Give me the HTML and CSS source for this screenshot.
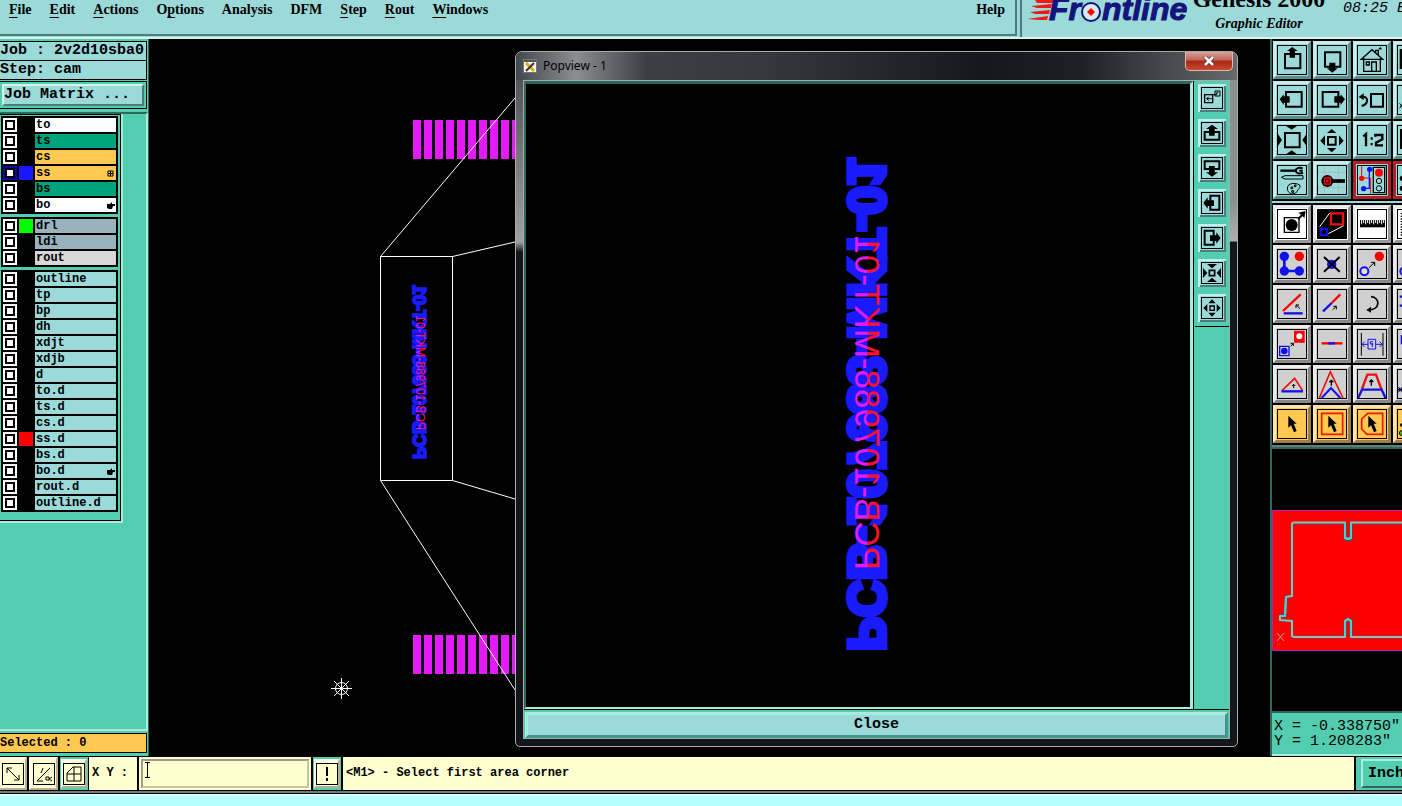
FILE: index.html
```html
<!DOCTYPE html>
<html lang="en">
<head>
<meta charset="utf-8">
<title>Genesis 2000 - Graphic Editor</title>
<link rel="stylesheet" href="styles.css">
</head>
<body>
<header class="top">
  <nav class="menu">
    <button class="menu-item"><u>F</u>ile</button>
    <button class="menu-item"><u>E</u>dit</button>
    <button class="menu-item"><u>A</u>ctions</button>
    <button class="menu-item">O<u>p</u>tions</button>
    <button class="menu-item">Analysis</button>
    <button class="menu-item">DFM</button>
    <button class="menu-item"><u>S</u>tep</button>
    <button class="menu-item"><u>R</u>out</button>
    <button class="menu-item"><u>W</u>indows</button>
    <button class="menu-item help">Help</button>
  </nav>
  <div class="brand">
    <svg class="logo" width="162" height="36" viewBox="0 0 162 36" role="img" aria-label="Frontline">
      <path fill="#f01818" d="M8 0H27L26 3H10zM4 6L25 4L24 8H10zM3 12L23 10L22 14H8zM0 19L21 16L20 20H12z"/>
      <text class="logo-text" x="22" y="20">Fr</text>
      <circle cx="64" cy="12" r="9" fill="#d4ecf0" stroke="#14147c" stroke-width="2"/>
      <path d="M64 8L68 12L64 16L60 12z" fill="#f00"/>
      <text class="logo-text" x="75" y="20">ntline</text>
    </svg>
    <div class="product"><span class="product-name">Genesis 2000</span><span class="product-sub">Graphic Editor</span></div>
    <span class="clock">08:25 E</span>
  </div>
</header>

<main class="work">
  <aside class="left">
    <div class="job-line">Job : 2v2d10sba0</div>
    <div class="job-line">Step: cam</div>
    <div class="matrix-frame"><button class="matrix">Job Matrix ...</button></div>
    <div class="layer-zone">
      <div class="layers">
        <div class="group">
          <label class="row"><input type="checkbox"><i class="chip"></i><span class="name white">to</span></label>
          <label class="row"><input type="checkbox"><i class="chip"></i><span class="name green">ts</span></label>
          <label class="row"><input type="checkbox"><i class="chip"></i><span class="name amber">cs</span></label>
          <label class="row current"><input type="checkbox"><i class="chip blue"></i><span class="name amber">ss<svg class="mark" width="9" height="9" viewBox="0 0 9 9"><path d="M2 2H7V7H2zM4.500 2V7M2 4.500H7" fill="none" stroke="#000"/></svg></span></label>
          <label class="row"><input type="checkbox"><i class="chip"></i><span class="name green">bs</span></label>
          <label class="row"><input type="checkbox"><i class="chip"></i><span class="name white">bo<svg class="mark" width="9" height="9" viewBox="0 0 9 9"><path d="M1 3L4 3L6 1V3H9V5H7L6 8H3L1 7z"/></svg></span></label>
        </div>
        <div class="group">
          <label class="row"><input type="checkbox"><i class="chip lime"></i><span class="name slate">drl</span></label>
          <label class="row"><input type="checkbox"><i class="chip"></i><span class="name slate">ldi</span></label>
          <label class="row"><input type="checkbox"><i class="chip"></i><span class="name grey">rout</span></label>
        </div>
        <div class="group">
          <label class="row"><input type="checkbox"><i class="chip"></i><span class="name">outline</span></label>
          <label class="row"><input type="checkbox"><i class="chip"></i><span class="name">tp</span></label>
          <label class="row"><input type="checkbox"><i class="chip"></i><span class="name">bp</span></label>
          <label class="row"><input type="checkbox"><i class="chip"></i><span class="name">dh</span></label>
          <label class="row"><input type="checkbox"><i class="chip"></i><span class="name">xdjt</span></label>
          <label class="row"><input type="checkbox"><i class="chip"></i><span class="name">xdjb</span></label>
          <label class="row"><input type="checkbox"><i class="chip"></i><span class="name">d</span></label>
          <label class="row"><input type="checkbox"><i class="chip"></i><span class="name">to.d</span></label>
          <label class="row"><input type="checkbox"><i class="chip"></i><span class="name">ts.d</span></label>
          <label class="row"><input type="checkbox"><i class="chip"></i><span class="name">cs.d</span></label>
          <label class="row"><input type="checkbox"><i class="chip red"></i><span class="name">ss.d</span></label>
          <label class="row"><input type="checkbox"><i class="chip"></i><span class="name">bs.d</span></label>
          <label class="row"><input type="checkbox"><i class="chip"></i><span class="name">bo.d<svg class="mark" width="9" height="9" viewBox="0 0 9 9"><path d="M1 3L4 3L6 1V3H9V5H7L6 8H3L1 7z"/></svg></span></label>
          <label class="row"><input type="checkbox"><i class="chip"></i><span class="name">rout.d</span></label>
          <label class="row"><input type="checkbox"><i class="chip"></i><span class="name">outline.d</span></label>
        </div>
      </div>
    </div>
    <div class="selected">Selected : 0</div>
  </aside>

  <section class="canvas">
    <svg class="board" width="1121" height="718" viewBox="149 39 1121 718">
      <defs>
        <pattern id="pads" x="413" y="120" width="11" height="515" patternUnits="userSpaceOnUse"><rect width="8" height="39" fill="#e41af8"/></pattern>
        <linearGradient id="mix" x1="0" y1="0" x2="0" y2="1"><stop offset=".48" stop-color="#ff1030"/><stop offset=".52" stop-color="#e41af8"/></linearGradient>
      </defs>
      <g fill="url(#pads)"><rect x="413" y="120" width="110" height="39"/><rect x="413" y="635" width="110" height="39"/></g>
      <path d="M380.500 256.500H452.500V480.500H380.500zM380.500 256.500L515 98M452.500 256.500L515 242M452.500 480.500L515 499M380.500 480.500L515 690" fill="none" stroke="#fff"/>
      <path d="M331 688.500H352M341.500 678V699M334 681L349 696M349 681L334 696" stroke="#fff" fill="none"/>
      <circle cx="341.500" cy="688.500" r="6" stroke="#fff" fill="none"/>
      <g transform="matrix(0 -1 1 0 413 459)"><text class="legend-blue small" transform="scale(1 -1)">PCB-107988-MKT-01</text></g>
      <g transform="matrix(0 -1 1 0 416 430)"><text class="legend-red small" transform="scale(1 -1)" fill="url(#mix)">PCB-107988-MKT-01</text></g>
    </svg>

    <div class="popup" role="dialog" aria-label="Popview - 1">
      <div class="titlebar">
        <svg width="14" height="14" viewBox="0 0 14 14"><path d="M.5 .5H13.500V13.500H.5z" fill="#f4f4f0" stroke="#777"/><path d="M1 2H13" stroke="#555" stroke-width="2"/><path d="M3 4L11 12" stroke="#d8b400" stroke-width="3"/><path d="M11 4L3 12" stroke="#333" stroke-width="2"/></svg>
        <span class="title">Popview - 1</span>
        <button class="win-close" aria-label="Close window"><svg width="12" height="10" viewBox="0 0 12 10"><path d="M2 1L10 9M10 1L2 9" stroke="#5b2a28" stroke-width="4"/><path d="M2 1L10 9M10 1L2 9" stroke="#fff" stroke-width="2.500"/></svg></button>
      </div>
      <div class="pop-body">
        <div class="pop-main">
          <div class="pop-canvas">
            <svg class="board" width="666" height="625" viewBox="526 83 666 625">
              <g transform="matrix(0 -1 1 0 849 650)"><text class="legend-blue big" transform="scale(1 -1)">PCB-107988-MKT-01</text></g>
              <g transform="matrix(0 -1 1 0 855 569)"><text class="legend-red big" transform="scale(1 -1)" fill="url(#mix)">PCB-107988-MKT-01</text></g>
            </svg>
          </div>
          <div class="pop-tools">
            <button class="pt" aria-label="Move popup"><svg viewBox="0 0 60 60"><path d="M8 20H32V44H8z" fill="none" stroke="#000" stroke-width="4"/><path d="M39 9H54V24H39zM14 32H29M20 26L14 32L20 38M32 20H44V14H49" fill="none" stroke="#000" stroke-width="3"/></svg></button>
            <button class="pt" aria-label="Pan up"><svg viewBox="0 0 60 60"><path d="M8 27H52V50H8z" fill="none" stroke="#000" stroke-width="6"/><path d="M30 5L48 18H38V38H21V18H12z"/></svg></button>
            <button class="pt" aria-label="Pan down"><svg viewBox="0 0 60 60"><path d="M8 10H52V33H8z" fill="none" stroke="#000" stroke-width="6"/><path d="M30 56L48 43H38V24H21V43H12z"/></svg></button>
            <button class="pt" aria-label="Pan left"><svg viewBox="0 0 60 60"><path d="M25 8H52V50H25z" fill="none" stroke="#000" stroke-width="6"/><path d="M4 30L17 13V22H36V39H17V47z"/></svg></button>
            <button class="pt" aria-label="Pan right"><svg viewBox="0 0 60 60"><path d="M8 8H35V50H8z" fill="none" stroke="#000" stroke-width="6"/><path d="M56 30L43 13V22H24V39H43V47z"/></svg></button>
            <button class="pt" aria-label="Zoom in"><svg viewBox="0 0 60 60"><path d="M22 22H38V38H22z" fill="none" stroke="#000" stroke-width="5"/><path d="M15 3H45L30 16zM15 57H45L30 44zM3 15V45L16 30zM57 15V45L44 30z"/></svg></button>
            <button class="pt" aria-label="Zoom out"><svg viewBox="0 0 60 60"><path d="M24 24H37V37H24z" fill="none" stroke="#000" stroke-width="4"/><path d="M30 4L41 16H19zM30 56L41 44H19zM4 30L16 18V42zM56 30L44 18V42z"/></svg></button>
          </div>
        </div>
        <div class="close-frame"><button class="close">Close</button></div>
      </div>
    </div>
  </section>

  <aside class="right">
    <div class="tools view">
      <button class="tb" aria-label="Pan up"><svg viewBox="0 0 90 90"><path d="M24 27H70V70H24z" fill="none" stroke="#000" stroke-width="6"/><path d="M46 6L62 18H54V38H38V18H30z"/></svg></button>
      <button class="tb" aria-label="Pan down"><svg viewBox="0 0 90 90"><path d="M24 22H70V65H24z" fill="none" stroke="#000" stroke-width="6"/><path d="M46 83L62 70H55V53H37V70H30z"/></svg></button>
      <button class="tb" aria-label="Home view"><svg viewBox="0 0 90 90"><path d="M13 43L45 14L77 43zM20 40V79H70V40M44 79V51H58V79M28 51H37V60H28zM56 23V16H64V32M66 13L70 9L73 13" fill="none" stroke="#000" stroke-width="4"/></svg></button>
      <button class="tb" aria-label="Screen"><svg viewBox="0 0 90 90"><path d="M8 12H80V72H8z"/></svg></button>
      <button class="tb" aria-label="Pan left"><svg viewBox="0 0 90 90"><path d="M27 21H74V65H27z" fill="none" stroke="#000" stroke-width="6"/><path d="M8 43L20 28V34H38V53H20V60z"/></svg></button>
      <button class="tb" aria-label="Pan right"><svg viewBox="0 0 90 90"><path d="M17 21H64V65H17z" fill="none" stroke="#000" stroke-width="6"/><path d="M84 43L71 28V34H52V53H71V60z"/></svg></button>
      <button class="tb" aria-label="Previous view"><svg viewBox="0 0 90 90"><path d="M42 27H78V65H42z" fill="none" stroke="#000" stroke-width="6"/><path d="M13 36C34 31 38 56 14 63" fill="none" stroke="#000" stroke-width="6"/><path d="M5 36L20 25V45z"/></svg></button>
      <button class="tb" aria-label="Next view"><svg viewBox="0 0 90 90"><path d="M8 55L18 70M18 55L8 70" stroke="#000" stroke-width="3"/></svg></button>
      <button class="tb" aria-label="Zoom in"><svg viewBox="0 0 90 90"><path d="M24 24H68V67H24z" fill="none" stroke="#000" stroke-width="6"/><path d="M27 3H60L44 14zM27 88H60L44 76zM3 28V62L15 45zM88 28V62L76 45z"/></svg></button>
      <button class="tb" aria-label="Zoom out"><svg viewBox="0 0 90 90"><path d="M33 36H56V59H33z" fill="none" stroke="#000" stroke-width="6"/><path d="M44 12L58 24H30zM44 82L58 69H30zM10 47L24 31V62zM80 47L66 31V62z"/></svg></button>
      <button class="tb" aria-label="Scale 1:2"><svg viewBox="0 0 90 90"><path d="M19 34L27 27V64" fill="none" stroke="#000" stroke-width="7"/><path d="M41 37H47V44H41zM41 54H47V61H41z"/><path d="M55 35V30H76V43L57 53V61H78" fill="none" stroke="#000" stroke-width="7"/></svg></button>
      <button class="tb" aria-label="Fit"><svg viewBox="0 0 90 90"><path d="M9 12H80V72H9z"/></svg></button>
      <button class="tb" aria-label="Setup tools"><svg viewBox="0 0 90 90"><path d="M10 17H58" stroke="#000" stroke-width="7"/><path d="M77 10C66 6 56 10 56 17C58 26 70 28 78 23M77 17H67" fill="none" stroke="#000" stroke-width="6"/><path d="M13 37L24 32H78V42H24zM32 76C26 56 50 50 68 60C72 68 62 72 60 80C48 92 36 86 32 76zM42 66H47V71H42zM52 60H57V65H52zM44 77H50V82H44z" fill="none" stroke="#000" stroke-width="3"/></svg></button>
      <button class="tb" aria-label="Net probe"><svg viewBox="0 0 90 90"><path d="M22 0V90M65 0V90M0 22H90M0 68H90" stroke="#aab8bb" stroke-width="3"/><path d="M40 48H84" stroke="#000" stroke-width="11"/><circle cx="31" cy="48" r="18"/><path d="M22 39H40V57H22zM29 46H33V50H29z" fill="none" stroke="#f00" stroke-width="4"/></svg></button>
      <button class="tb alarm" aria-label="Net highlight"><svg viewBox="0 0 90 90"><path d="M14 0V39H41V90" fill="none" stroke="#f00" stroke-width="3"/><path d="M37 12V70H20" fill="none" stroke="#11e" stroke-width="4"/><circle cx="14" cy="40" r="8" fill="#f00"/><circle cx="38" cy="13" r="8" fill="#11e"/><circle cx="20" cy="71" r="8" fill="#11e"/><path d="M49 7H83V83H49z" fill="none" stroke="#000" stroke-width="4"/><circle cx="66" cy="23" r="12" fill="#f00"/><g fill="none" stroke="#000" stroke-width="3"><circle cx="66" cy="48" r="8"/><circle cx="66" cy="70" r="8"/></g></svg></button>
      <button class="tb alarm" aria-label="Net lights"><svg viewBox="0 0 90 90"><circle cx="16" cy="40" r="8"/><circle cx="16" cy="70" r="8"/></svg></button>
    </div>
    <div class="tools edit">
      <button class="tb plain" aria-label="Pad to"><svg viewBox="0 0 90 90"><path d="M22 26H66V70H22z" fill="none" stroke="#000" stroke-width="4"/><circle cx="44" cy="48" r="18"/><path d="M61 28L72 17L64 11L86 6L82 28L77 21L66 32z"/></svg></button>
      <button class="tb plain" aria-label="Popview"><svg viewBox="0 0 90 90"><path d="M3 3H87V87H3z"/><path d="M8 53L38 12M34 74L80 50" stroke="#fff" stroke-width="3"/><path d="M42 13H78V46H42z" fill="none" stroke="#f01010" stroke-width="7"/><path d="M11 59H30V78H11z" fill="none" stroke="#11e" stroke-width="6"/></svg></button>
      <button class="tb plain" aria-label="Measure"><svg viewBox="0 0 90 90"><path d="M9 33H84V55H9z"/><path d="M14 32V46M20 32V42M26 32V46M32 32V42M38 32V46M44 32V42M50 32V46M56 32V42M62 32V46M68 32V42M74 32V46M80 32V42" stroke="#fff" stroke-width="3"/></svg></button>
      <button class="tb plain" aria-label="Grid"><svg viewBox="0 0 90 90"><path d="M13 12V80" stroke="#000" stroke-width="4" stroke-dasharray="4 4"/></svg></button>
      <button class="tb gray" aria-label="Add feature"><svg viewBox="0 0 90 90"><path d="M22 22V66H67" fill="none" stroke="#11e" stroke-width="8"/><g fill="#11e"><circle cx="22" cy="22" r="14"/><circle cx="22" cy="66" r="14"/><circle cx="67" cy="66" r="14"/></g><circle cx="67" cy="22" r="14" fill="#f00"/></svg></button>
      <button class="tb gray" aria-label="Delete feature"><svg viewBox="0 0 90 90"><circle cx="44" cy="46" r="14" fill="#11e"/><path d="M21 24L68 68M68 24L21 68" stroke="#000" stroke-width="6"/></svg></button>
      <button class="tb gray" aria-label="Move feature"><svg viewBox="0 0 90 90"><circle cx="22" cy="67" r="12" fill="#ddd" stroke="#11e" stroke-width="6"/><circle cx="67" cy="22" r="14" fill="#f00"/><path d="M36 56L53 40M42 40H53V51" fill="none" stroke="#000" stroke-width="3"/></svg></button>
      <button class="tb gray" aria-label="Copy feature"><svg viewBox="0 0 90 90"><circle cx="22" cy="67" r="12" fill="none" stroke="#11e" stroke-width="6"/></svg></button>
      <button class="tb gray" aria-label="Rotate line"><svg viewBox="0 0 90 90"><path d="M18 66L71 16" stroke="#f00" stroke-width="7"/><path d="M20 73H77" stroke="#11e" stroke-width="7"/><path d="M69 59L58 48M57 57V48H66" fill="none" stroke="#000" stroke-width="3"/></svg></button>
      <button class="tb gray" aria-label="Extend line"><svg viewBox="0 0 90 90"><path d="M18 67L44 42" stroke="#11e" stroke-width="7"/><path d="M44 42L70 16" stroke="#f00" stroke-width="7"/><path d="M47 62L58 52M49 52H58V61" fill="none" stroke="#000" stroke-width="3"/></svg></button>
      <button class="tb gray" aria-label="Rotate"><svg viewBox="0 0 90 90"><path d="M42 23C70 24 72 64 32 63" fill="none" stroke="#000" stroke-width="5"/><path d="M28 63L42 53V71z"/></svg></button>
      <button class="tb gray" aria-label="Mirror"><svg viewBox="0 0 90 90"><path d="M8 23H20M8 50H20" stroke="#11e" stroke-width="7"/></svg></button>
      <button class="tb gray" aria-label="Resize feature"><svg viewBox="0 0 90 90"><path d="M8 52H36V80H8z" fill="none" stroke="#11e" stroke-width="4"/><circle cx="22" cy="66" r="10" fill="#11e"/><path d="M54 8H80V38H54z" fill="#f00" stroke="#f00" stroke-width="6"/><circle cx="67" cy="22" r="9" fill="#fff"/><path d="M41 51L49 44M41 43H49V51" fill="none" stroke="#000" stroke-width="3"/></svg></button>
      <button class="tb gray" aria-label="Break line"><svg viewBox="0 0 90 90"><path d="M14 43H76" stroke="#f00" stroke-width="7"/><path d="M34 43H54" stroke="#11e" stroke-width="7"/></svg></button>
      <button class="tb gray" aria-label="Spacing"><svg viewBox="0 0 90 90"><path d="M13 12V80M78 12V80" stroke="#000" stroke-width="3"/><path d="M15 46H33M56 46H76M23 38L15 46L23 54M68 38L76 46L68 54M33 31H56V60H33zM48 38H40V45H49M46 42V54" fill="none" stroke="#11e" stroke-width="3"/></svg></button>
      <button class="tb gray" aria-label="Square"><svg viewBox="0 0 90 90"><path d="M11 18H80V46H11z" fill="#11e"/></svg></button>
      <button class="tb gray" aria-label="Slide point"><svg viewBox="0 0 90 90"><path d="M15 65L53 28L77 65" fill="none" stroke="#e81010" stroke-width="5"/><path d="M13 67H78" stroke="#11e" stroke-width="7"/><path d="M50 57V46M45 51L50 46L55 51" fill="none" stroke="#000" stroke-width="3"/></svg></button>
      <button class="tb gray" aria-label="Move vertex"><svg viewBox="0 0 90 90"><path d="M7 87L40 8L78 87" fill="none" stroke="#e81010" stroke-width="5"/><path d="M14 87L42 57L70 87" fill="none" stroke="#11e" stroke-width="6"/><path d="M43 50V34M37 40L43 34L49 40" fill="none" stroke="#000" stroke-width="4"/></svg></button>
      <button class="tb gray" aria-label="Move segment"><svg viewBox="0 0 90 90"><path d="M15 60L31 17H57L73 60" fill="none" stroke="#e81010" stroke-width="7"/><path d="M3 88L15 62H74L86 88" fill="none" stroke="#11e" stroke-width="7"/><path d="M43 50V33M37 39L43 33L49 39" fill="none" stroke="#000" stroke-width="4"/></svg></button>
      <button class="tb gray" aria-label="Cut"><svg viewBox="0 0 90 90"><path d="M0 62H20" stroke="#11e" stroke-width="6"/><path d="M4 54L16 70M16 54L4 70" stroke="#000" stroke-width="3"/></svg></button>
      <button class="tb gold" aria-label="Select"><svg viewBox="0 0 90 90"><path d="M34 20L59 44H50L59 66L51 70L42 49L34 56z"/></svg></button>
      <button class="tb gold" aria-label="Select by frame"><svg viewBox="0 0 90 90"><path d="M14 13H77V76H14z" fill="none" stroke="#f01800" stroke-width="5"/><path d="M34 20L59 44H50L59 66L51 70L42 49L34 56z"/></svg></button>
      <button class="tb gold" aria-label="Select by polygon"><svg viewBox="0 0 90 90"><path d="M32 13H77V76H30L14 60V30z" fill="none" stroke="#f01800" stroke-width="5"/><path d="M34 20L59 44H50L59 66L51 70L42 49L34 56z"/></svg></button>
      <button class="tb gold" aria-label="Select net"><svg viewBox="0 0 90 90"><circle cx="14" cy="48" r="5"/><circle cx="14" cy="72" r="7" fill="#3b3" stroke="#000" stroke-width="3"/></svg></button>
    </div>
    <div class="overview">
      <svg class="mini" height="141" viewBox="0 0 130 141" preserveAspectRatio="xMinYMin slice" role="img" aria-label="Board overview">
        <path d="M.5 .5H140V140.500H.5z" fill="#f00" stroke="#b01ac8"/>
        <g fill="none" stroke-linejoin="round"><path d="M135 13H79V29L76 30L73 29V13H22L20 15V86L14 87L13 106H8V110L20 111V126L22 127H73V111L76 109L79 111V127H135" stroke="#4e4e4e" stroke-width="3"/><path d="M135 12.500H79V28L76 29L73 28V12.500H21L20 14V86L14 87L13 106H8V110L20 111V126L22 127H73V111L76 109L79 111V127H135" stroke="#a4b4b4" stroke-width="2"/><path d="M79 13V28L76 29L73 28V13M14 87L13 106H8M73 126V111L76 109L79 111V126" stroke="#31d9dc" stroke-width="2"/></g>
        <path d="M5 123L12 131M12 123L5 131" stroke="#c99"/>
      </svg>
    </div>
    <div class="coords"><div>X = -0.338750"</div><div>Y = 1.208283"</div></div>
  </aside>
</main>

<footer class="command">
  <button class="cmd" aria-label="Snap to corner"><svg viewBox="0 0 20 20"><path d="M4 4L16 16M4 9V4H9M11 16H16V11" fill="none" stroke="#000"/></svg></button>
  <button class="cmd" aria-label="Absolute or relative"><svg viewBox="0 0 20 20"><path d="M3 17L16 4M3 17H9M9 4L7 9M12 13H15V16H12zM18 13L15 15L18 17" fill="none" stroke="#000"/></svg></button>
  <span class="cmd-frame"><button class="cmd" aria-label="Grid"><svg viewBox="0 0 20 20"><path d="M9 3H17V17H3V9zM10 3V17M3 10H17" fill="none" stroke="#000"/></svg></button></span>
  <label class="xy-label" for="xy">X Y :</label>
  <div class="xy-wrap"><input id="xy" class="xy" type="text">
    <svg class="caret" width="7" height="16" viewBox="0 0 7 16"><path d="M1 .5H6M3.500 .5V15.500M1 15.500H6" stroke="#000" fill="none"/></svg></div>
  <span class="cmd-frame"><button class="cmd" aria-label="Alert"><svg viewBox="0 0 20 20"><path d="M10 3V12M10 14V17" stroke="#000" stroke-width="2"/></svg></button></span>
  <div class="message">&lt;M1&gt; - Select first area corner</div>
  <div class="unit-frame"><button class="unit">Inch</button></div>
</footer>
<div class="strip"></div>
</body>
</html>
```
FILE: styles.css
```css
* { box-sizing: border-box; }
html, body { height: 100%; }
body {
  margin: 0;
  display: flex;
  flex-direction: column;
  overflow: hidden;
  background: #000;
  color: #000;
  font: bold 15px/18px "Liberation Mono", monospace;
}
button { font: inherit; color: inherit; padding: 0; margin: 0; border: 0; background: none; }
svg { display: block; flex: none; }

/* header */
.top { display: flex; height: 39px; flex: none; background: #9cdada; border-bottom: 2px solid #d4f4f0; }
.menu {
  flex: 1;
  display: flex;
  align-items: flex-start;
  gap: 18px;
  padding: 1px 10px 0 9px;
  border-right: 2px solid #4c7c7c;
  border-bottom: 2px solid #4c7c7c;
  margin-bottom: 1px;
  font: bold 14px/17px "Liberation Serif", serif;
}
.menu-item { white-space: nowrap; }
.menu-item u { text-decoration: underline 1px; text-underline-offset: 3px; text-decoration-skip-ink: none; }
.help { margin-left: auto; }
.brand { flex: 0 0 382px; display: flex; overflow: hidden; margin-left: 3px; border-left: 2px solid #4c7c7c; padding-left: 5px; }
.logo-text { font: italic bold 32px "Liberation Sans", sans-serif; fill: #14147c; stroke: #14147c; }
.product { display: flex; flex-direction: column; align-items: center; width: 140px; margin-top: -15px; flex: none; }
.product-name { font: bold 24px/28px "Liberation Serif", serif; white-space: nowrap; }
.product-sub { font: italic bold 14px/22px "Liberation Serif", serif; }
.clock { font: italic 15px/18px "Liberation Mono", monospace; margin-left: 14px; white-space: nowrap; }

.work { flex: 1; display: flex; min-height: 0; }

/* layer panel */
.left { flex: 0 0 149px; display: flex; flex-direction: column; background: #53cdb0; padding-top: 2px; border-right: 1px solid #2c685c; }
.job-line { height: 20px; margin: 0 1px -1px 0; border: 1px solid #000; border-left: 0; background: #9cdada; line-height: 18px; white-space: nowrap; }
.matrix-frame { margin: 2px 1px 3px 0; padding: 2px; border: 1px solid #000; border-left: 0; }
.matrix { display: block; width: 100%; height: 22px; text-align: left; background: #9cdada; border: 2px solid; border-color: #d4f4f0 #4c7c7c #4c7c7c #d4f4f0; }
.layer-zone { flex: 1; border-top: 2px solid #2c685c; border-right: 2px solid #a8ecdc; border-bottom: 2px solid #a8ecdc; }
.layers { width: 123px; padding: 2px 0 9px 1px; border: solid #a8ecdc; border-width: 0 2px 2px 0; box-shadow: inset -1px 1px #000, inset 0 -1px #000; display: flex; flex-direction: column; gap: 3px; }
.group { width: 117px; padding: 2px; background: #000; display: grid; gap: 2px; }
.row { display: grid; grid-template-columns: 14px 14px 1fr; gap: 2px; height: 14px; }
.row input { appearance: none; margin: 0; width: 14px; height: 14px; background: #fff; border: 2px solid #fff; outline: 2px solid #000; outline-offset: -4px; }
.row.current input { border-color: #0808a8; }
.chip { background: #000; }
.blue { background: #1818ff; }
.lime { background: #0f0; }
.red { background: #f00; }
.name { display: flex; justify-content: space-between; align-items: center; padding: 0 1px; background: #9cdada; font-size: 12px; line-height: 14px; }
.white { background: #fff; }
.green { background: #00a47c; }
.amber { background: #ffc850; }
.slate { background: #9ab2bc; }
.grey { background: #d8d8d8; }
.selected { margin: 2px 1px 3px 0; border: 1px solid #000; border-left: 0; background: #ffc850; font-size: 12px; line-height: 18px; }

/* drawing area */
.canvas { flex: 1; position: relative; min-width: 0; }
.board { max-width: none; }
.legend-blue { fill: #1a1aff; stroke: #1a1aff; font-family: "Liberation Sans", sans-serif; font-weight: bold; }
.legend-red { font-family: "Liberation Sans", sans-serif; font-weight: normal; }
.legend-blue.small { font-size: 18px; stroke-width: 2px; }
.legend-red.small { font-size: 12px; }
.legend-blue.big { font-size: 51px; stroke-width: 5px; }
.legend-red.big { font-size: 35px; }

/* floating view */
.popup {
  position: absolute; left: 366px; top: 12px; width: 723px; height: 696px;
  display: flex; flex-direction: column;
  padding: 0 7px 7px;
  border: 1px solid #a8acac;
  border-radius: 7px 7px 5px 5px;
  background: linear-gradient(#8c8e90, #8c8e90 150px, #b0b0b0 189px, #12161a 190px) right top / 8px 100% no-repeat, linear-gradient(#44484c, #a0a0a0 190px, #12161a 200px) left top / 8px 100% no-repeat, #14181c;
}
.titlebar { display: flex; align-items: center; height: 28px; flex: none; margin: 0 -7px; padding: 0 4px 0 7px; gap: 6px; border-radius: 6px 6px 0 0; background: linear-gradient(90deg, #44484c, #8b8d90 60px, #3c4044 130px, #34383c 35%, #14181e 65%, #1c2026 78%, #686a6c); }
.title { flex: 1; font: 12px/16px "Noto Sans", sans-serif; }
.win-close { align-self: flex-start; width: 48px; height: 19px; display: grid; place-items: center; border: 1px solid #e0b8b0; border-top: 0; border-radius: 0 0 5px 5px; background: linear-gradient(#d8a098, #c46458 45%, #a82818 50%, #c84830); }
.pop-body { flex: 1; display: flex; flex-direction: column; min-height: 0; border: 1px solid #a8acac; background: #53cdb0; }
.pop-main { flex: 1; display: flex; min-height: 0; }
.pop-canvas { flex: 1; min-width: 0; overflow: hidden; background: #000; border: solid; border-width: 3px 3px 2px 2px; border-color: #2c685c #a8ecdc #a8ecdc #2c685c; }
.pop-tools { flex: 0 0 36px; border-left: 1px solid #000; }
.pt { display: grid; place-items: center; width: 34px; height: 35px; margin: 0 auto; background: #9cdada; border: solid #53cdb0; border-width: 3px 3px 4px; box-shadow: 0 1px #000, inset 2px 2px #bff0ec, inset -2px -2px #4c7c7c; }
.pt svg { width: 20px; height: 20px; outline: 1px solid #000; }
.close-frame { flex: none; padding: 2px 1px 0; border-top: 1px solid #000; }
.close { display: block; width: 100%; height: 26px; background: #9cdada; border: 3px solid; border-color: #a8ecdc #3f988c #3f988c #a8ecdc; }

/* tool palette */
.right { flex: 0 0 132px; display: flex; flex-direction: column; min-width: 0; overflow: hidden; border-left: 2px solid #2c685c; }
.tools { display: grid; grid-template-columns: repeat(4, 38px); gap: 2px; padding: 2px 1px; background: #000; border-bottom: 2px solid #9cdada; flex: none; }
.tools.edit { border-color: #687c78; }
.tb { width: 38px; height: 38px; display: grid; place-items: center; background: #9cdada; border: 3px solid; border-color: #c8ecec #5c8c8c #5c8c8c #c8ecec; }
.tb svg { width: 30px; height: 30px; outline: 1px solid #000; outline-offset: -1px; }
.alarm { border-color: #b02024; }
.plain { background: #fff; border-color: #e8e8e8 #989898 #989898 #e8e8e8; }
.gray { background: #d0d0d0; border-color: #ececec #888 #888 #ececec; }
.gold { background: #ffc850; border-color: #ffe4ac #a08040 #a08040 #ffe4ac; }
.overview { flex: 1; min-height: 0; display: flex; align-items: center; background: #000; border-top: 2px solid #2c685c; }
.mini { width: 100%; }
.coords { flex: none; padding: 6px 2px 5px; border-top: 2px solid #2c685c; border-bottom: 2px solid #a8ecdc; background: #53cdb0; font-weight: normal; line-height: 15px; white-space: nowrap; }

/* command line */
.command { flex: none; display: flex; align-items: stretch; gap: 2px; height: 34px; margin-top: 1px; border-bottom: 1px solid #000; font-size: 12px; }
.cmd { display: grid; place-items: center; width: 29px; background: #ffffd0; border: 2px solid; border-color: #ffffe8 #b4b090 #b4b090 #ffffe8; }
.cmd svg { width: 20px; height: 20px; outline: 1px solid #000; }
.command > .cmd:first-child { margin-left: -2px; }
.cmd-frame { display: flex; padding: 2px 1px; background: #53cdb0; }
.cmd-frame .cmd { width: 26px; }
.xy-label { width: 48px; padding: 0 3px; background: #ffffd0; line-height: 32px; margin-left: -1px; white-space: nowrap; }
.xy-wrap { position: relative; display: flex; width: 172px; padding: 2px; background: #ffffd0; }
.xy { flex: 1; min-width: 0; background: #ffffd0; border: 2px solid; border-color: #a09c88 #c8c4a0 #c8c4a0 #a09c88; font: inherit; padding: 0 8px; }
.caret { position: absolute; left: 5px; top: 5px; }
.message { flex: 1; background: #ffffd0; padding-left: 3px; line-height: 32px; }
.unit-frame { width: 46px; overflow: hidden; display: flex; padding: 2px 0 2px 5px; background: #53cdb0; }
.unit { flex: 0 0 60px; text-align: left; padding-left: 5px; font-size: 15px; border: 2px solid; border-color: #a8ecdc #2c685c #2c685c #a8ecdc; }
.strip { flex: none; height: 15px; border-top: 2px solid #687c84; background: #b4ffff; box-shadow: inset 0 1px #000, inset 0 3px #d8fcfc; }
```
